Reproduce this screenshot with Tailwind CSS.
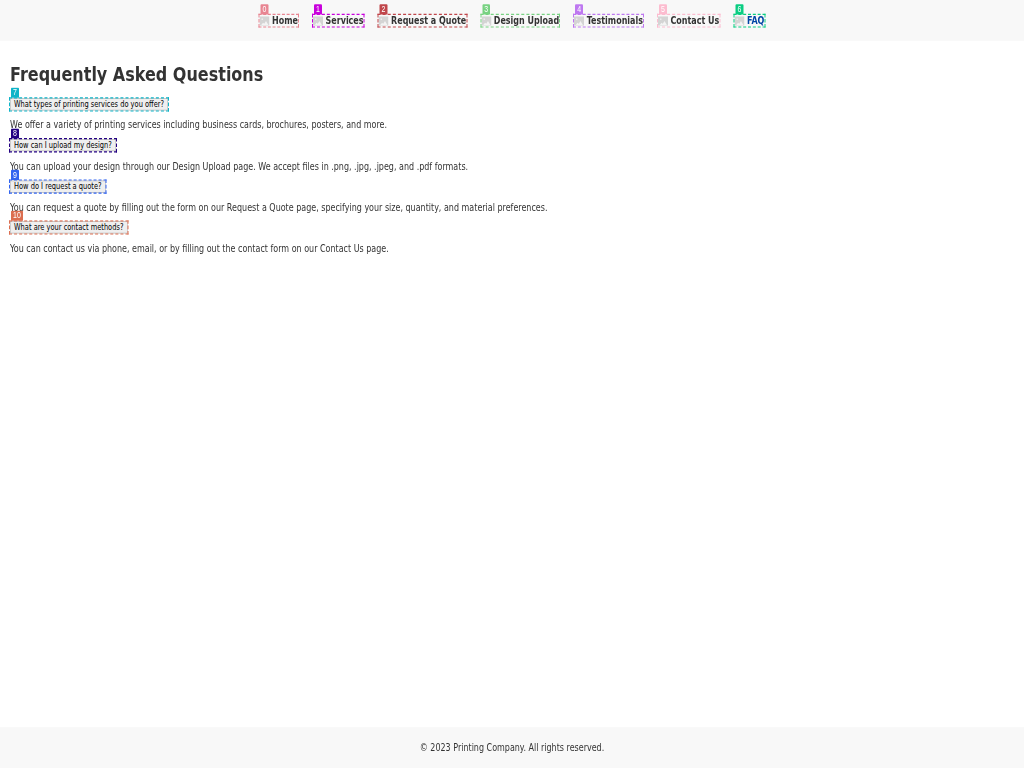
<!DOCTYPE html>
<html lang="en"><head><meta charset="utf-8"><title>Frequently Asked Questions</title>
<script src="https://cdn.jsdelivr.net/npm/@tailwindcss/browser@4"></script></head>
<body class="bg-white">
<svg class="hidden"><symbol id="pic" viewBox="0 0 20 16"><path fill="#d4d4d4" d="M0 0h20v16H0z"/><circle cx="5.5" cy="5" r="1.5" fill="#eee"/><path fill="#f4f4f4" d="M3 15l4-4 2.5 1.5L13 8l5 7z"/></symbol></svg>
<div class="h-[768px] w-[1024px] overflow-hidden">
<div class="flex h-[1280px] w-[2048px] origin-top-left transform-[scale(0.5,0.6)] flex-col font-['DejaVu_Sans',sans-serif] text-[16px] leading-[25.6px] whitespace-nowrap text-[#333]">
<header class="h-[67.5px] shrink-0 bg-[#f8f8f8] pt-[24.5px]">
<nav class="flex justify-center gap-[30px] leading-[19px] font-bold">
<a class="relative flex h-[19px] items-center gap-[5px] pt-[1px] outline-2 outline-dashed outline-[#e88592]"><svg class="h-[16px] w-[20px]"><use href="#pic"/></svg>Home<b class="absolute -top-[18px] left-[2px] h-[17px] rounded-t-[2px] bg-[#e88592] px-[4px] font-['Liberation_Sans',sans-serif] text-[14px] leading-[17px] font-normal text-white">0</b></a>
<a class="relative flex h-[19px] items-center gap-[5px] pt-[1px] outline-2 outline-dashed outline-[#c800dc]"><svg class="h-[16px] w-[20px]"><use href="#pic"/></svg>Services<b class="absolute -top-[18px] left-[2px] h-[17px] rounded-t-[2px] bg-[#c800dc] px-[4px] font-['Liberation_Sans',sans-serif] text-[14px] leading-[17px] font-normal text-white">1</b></a>
<a class="relative flex h-[19px] items-center gap-[5px] pt-[1px] outline-2 outline-dashed outline-[#c0464b]"><svg class="h-[16px] w-[20px]"><use href="#pic"/></svg>Request a Quote<b class="absolute -top-[18px] left-[2px] h-[17px] rounded-t-[2px] bg-[#c0464b] px-[4px] font-['Liberation_Sans',sans-serif] text-[14px] leading-[17px] font-normal text-white">2</b></a>
<a class="relative flex h-[19px] items-center gap-[5px] pt-[1px] outline-2 outline-dashed outline-[#78d282]"><svg class="h-[16px] w-[20px]"><use href="#pic"/></svg>Design Upload<b class="absolute -top-[18px] left-[2px] h-[17px] rounded-t-[2px] bg-[#78d282] px-[4px] font-['Liberation_Sans',sans-serif] text-[14px] leading-[17px] font-normal text-white">3</b></a>
<a class="relative flex h-[19px] items-center gap-[5px] pt-[1px] outline-2 outline-dashed outline-[#be78f0]"><svg class="h-[16px] w-[20px]"><use href="#pic"/></svg>Testimonials<b class="absolute -top-[18px] left-[2px] h-[17px] rounded-t-[2px] bg-[#be78f0] px-[4px] font-['Liberation_Sans',sans-serif] text-[14px] leading-[17px] font-normal text-white">4</b></a>
<a class="relative flex h-[19px] items-center gap-[5px] pt-[1px] outline-2 outline-dashed outline-[#fcbccf]"><svg class="h-[16px] w-[20px]"><use href="#pic"/></svg>Contact Us<b class="absolute -top-[18px] left-[2px] h-[17px] rounded-t-[2px] bg-[#fcbccf] px-[4px] font-['Liberation_Sans',sans-serif] text-[14px] leading-[17px] font-normal text-white">5</b></a>
<a class="relative flex h-[19px] items-center gap-[5px] pt-[1px] outline-2 outline-dashed outline-[#0acd82]"><svg class="h-[16px] w-[20px]"><use href="#pic"/></svg><span class="text-[#0045a5]">FAQ</span><b class="absolute -top-[18px] left-[2px] h-[17px] rounded-t-[2px] bg-[#0acd82] px-[4px] font-['Liberation_Sans',sans-serif] text-[14px] leading-[17px] font-normal text-white">6</b></a>
</nav></header>
<main class="grow px-[20px] pt-[31.5px]">
<h1 class="text-[32px] leading-[51.2px] font-bold">Frequently Asked Questions</h1>
<section class="mt-[13.5px] h-[68.5px]"><button class="relative block h-[20px] border border-[#aaa] bg-[#efefef] px-[7px] text-[13.333px] leading-[18px] text-black outline-2 outline-dashed outline-[#0fb4c8]">What types of printing services do you offer?<b class="absolute -top-[19px] left-px h-[17px] rounded-t-[2px] bg-[#0fb4c8] px-[4px] font-['Liberation_Sans',sans-serif] text-[14px] leading-[17px] font-normal text-white">7</b></button><p class="mt-[12.5px]">We offer a variety of printing services including business cards, brochures, posters, and more.</p></section>
<section class="h-[68.5px]"><button class="relative block h-[20px] border border-[#aaa] bg-[#efefef] px-[7px] text-[13.333px] leading-[18px] text-black outline-2 outline-dashed outline-[#230082]">How can I upload my design?<b class="absolute -top-[19px] left-px h-[17px] rounded-t-[2px] bg-[#230082] px-[4px] font-['Liberation_Sans',sans-serif] text-[14px] leading-[17px] font-normal text-white">8</b></button><p class="mt-[12.5px]">You can upload your design through our Design Upload page. We accept files in .png, .jpg, .jpeg, and .pdf formats.</p></section>
<section class="h-[68.5px]"><button class="relative block h-[20px] border border-[#aaa] bg-[#efefef] px-[7px] text-[13.333px] leading-[18px] text-black outline-2 outline-dashed outline-[#3264f0]">How do I request a quote?<b class="absolute -top-[19px] left-px h-[17px] rounded-t-[2px] bg-[#3264f0] px-[4px] font-['Liberation_Sans',sans-serif] text-[14px] leading-[17px] font-normal text-white">9</b></button><p class="mt-[12.5px]">You can request a quote by filling out the form on our Request a Quote page, specifying your size, quantity, and material preferences.</p></section>
<section class="h-[68.5px]"><button class="relative block h-[20px] border border-[#aaa] bg-[#efefef] px-[7px] text-[13.333px] leading-[18px] text-black outline-2 outline-dashed outline-[#dc6e50]">What are your contact methods?<b class="absolute -top-[19px] left-px h-[17px] rounded-t-[2px] bg-[#dc6e50] px-[4px] font-['Liberation_Sans',sans-serif] text-[14px] leading-[17px] font-normal text-white">10</b></button><p class="mt-[12.5px]">You can contact us via phone, email, or by filling out the contact form on our Contact Us page.</p></section>
</main>
<footer class="flex h-[68px] shrink-0 items-center justify-center bg-[#f8f8f8]">© 2023 Printing Company. All rights reserved.</footer>
</div></div>
</body></html>
